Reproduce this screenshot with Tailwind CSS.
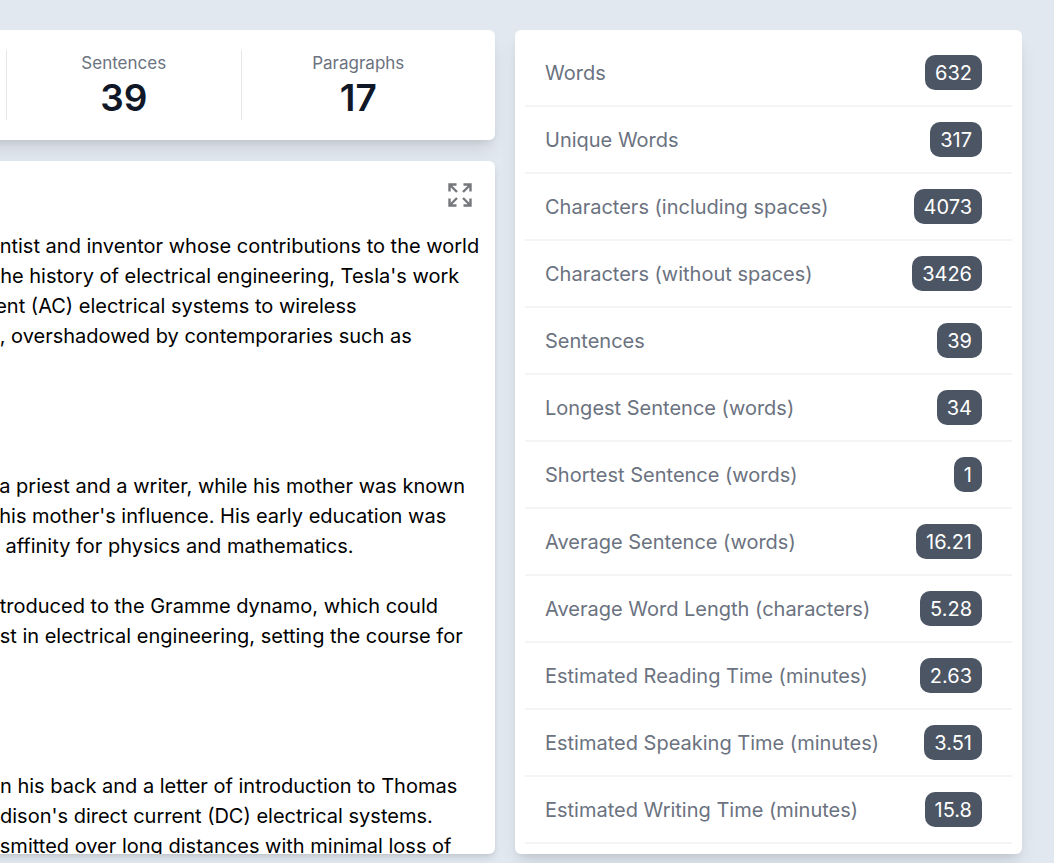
<!DOCTYPE html>
<html lang="en">
<head>
  <meta charset="UTF-8" />
  <meta name="viewport" content="width=device-width, initial-scale=1.0"/>
  <title>Word Counter</title>
  <script src="https://cdn.jsdelivr.net/npm/@tailwindcss/browser@4"></script>
</head>

<body class="bg-[#e2e8f0] font-['Inter',sans-serif] overflow-x-hidden">
  <main class="grid grid-cols-[495fr_507fr] gap-5 pt-[30px] pr-8 pb-[9px]">

    <!-- Left column -->
    <div class="min-w-0 flex flex-col gap-[21px]">
      <!-- Summary -->
      <section class="bg-white rounded-md shadow-[0_12px_19px_-4px_rgb(0_0_0/0.1),0_5px_8px_-4px_rgb(0_0_0/0.1)] -ml-5 pl-[26px] pr-5 py-5">
        <dl class="grid grid-cols-2 text-center">
          <div class="border-l border-gray-200">
            <dt class="text-[17px] leading-[26px] text-[#6b7280]">Sentences</dt>
            <dd class="text-[37px] leading-[44px] font-semibold text-gray-900">39</dd>
          </div>
          <div class="border-l border-gray-200">
            <dt class="text-[17px] leading-[26px] text-[#6b7280]">Paragraphs</dt>
            <dd class="text-[37px] leading-[44px] font-semibold text-gray-900">17</dd>
          </div>
        </dl>
      </section>

      <!-- Editor -->
      <section class="flex-1 flex flex-col bg-white rounded-md shadow-[0_5px_8px_-1px_rgb(0_0_0/0.1),0_2px_5px_-2px_rgb(0_0_0/0.1)] -ml-5 pl-5 overflow-hidden">
        <div class="flex justify-end pt-[22px] pr-[23px] pb-6">
          <button type="button" aria-label="Full screen" class="text-[#75777b]">
            <svg class="block size-6" viewBox="0 0 24 24" fill="none" stroke="currentColor" stroke-width="2.4">
              <path d="M1.5 8.5V1.5H8.5M1.5 1.5L9 9" />
              <path d="M15.5 1.5H22.5V8.5M22.5 1.5L15 9" />
              <path d="M1.5 15.5V22.5H8.5M1.5 22.5L9 15" />
              <path d="M15.5 22.5H22.5V15.5M22.5 22.5L15 15" />
            </svg>
          </button>
        </div>
        <textarea aria-label="Text" spellcheck="false" class="flex-1 block w-full -ml-3 resize-none outline-none overflow-hidden whitespace-pre text-[20px] leading-[30px] text-black">
entist and inventor whose contributions to the world
 the history of electrical engineering, Tesla's work
rent (AC) electrical systems to wireless
e, overshadowed by contemporaries such as




  a priest and a writer, while his mother was known
  his mother's influence. His early education was
n affinity for physics and mathematics.

ntroduced to the Gramme dynamo, which could
est in electrical engineering, setting the course for




on his back and a letter of introduction to Thomas
Edison's direct current (DC) electrical systems.
nsmitted over long distances with minimal loss of</textarea>
      </section>
    </div>

    <!-- Details -->
    <section class="min-w-0 bg-white rounded-md shadow-[0_12px_19px_-4px_rgb(0_0_0/0.1),0_5px_8px_-4px_rgb(0_0_0/0.1)] p-2.5">
      <dl class="text-[20px]">
        <div class="flex items-center justify-between border-b-2 border-gray-100 pl-5 pr-[30px] py-[15px]">
          <dt class="text-[#6b7280]">Words</dt>
          <dd class="bg-[#4b5563] text-white rounded-[10px] px-2.5 pt-[3px] pb-[2px]">632</dd>
        </div>
        <div class="flex items-center justify-between border-b-2 border-gray-100 pl-5 pr-[30px] py-[15px]">
          <dt class="text-[#6b7280]">Unique Words</dt>
          <dd class="bg-[#4b5563] text-white rounded-[10px] px-2.5 pt-[3px] pb-[2px]">317</dd>
        </div>
        <div class="flex items-center justify-between border-b-2 border-gray-100 pl-5 pr-[30px] py-[15px]">
          <dt class="text-[#6b7280]">Characters (including spaces)</dt>
          <dd class="bg-[#4b5563] text-white rounded-[10px] px-2.5 pt-[3px] pb-[2px]">4073</dd>
        </div>
        <div class="flex items-center justify-between border-b-2 border-gray-100 pl-5 pr-[30px] py-[15px]">
          <dt class="text-[#6b7280]">Characters (without spaces)</dt>
          <dd class="bg-[#4b5563] text-white rounded-[10px] px-2.5 pt-[3px] pb-[2px]">3426</dd>
        </div>
        <div class="flex items-center justify-between border-b-2 border-gray-100 pl-5 pr-[30px] py-[15px]">
          <dt class="text-[#6b7280]">Sentences</dt>
          <dd class="bg-[#4b5563] text-white rounded-[10px] px-2.5 pt-[3px] pb-[2px]">39</dd>
        </div>
        <div class="flex items-center justify-between border-b-2 border-gray-100 pl-5 pr-[30px] py-[15px]">
          <dt class="text-[#6b7280]">Longest Sentence (words)</dt>
          <dd class="bg-[#4b5563] text-white rounded-[10px] px-2.5 pt-[3px] pb-[2px]">34</dd>
        </div>
        <div class="flex items-center justify-between border-b-2 border-gray-100 pl-5 pr-[30px] py-[15px]">
          <dt class="text-[#6b7280]">Shortest Sentence (words)</dt>
          <dd class="bg-[#4b5563] text-white rounded-[10px] px-2.5 pt-[3px] pb-[2px]">1</dd>
        </div>
        <div class="flex items-center justify-between border-b-2 border-gray-100 pl-5 pr-[30px] py-[15px]">
          <dt class="text-[#6b7280]">Average Sentence (words)</dt>
          <dd class="bg-[#4b5563] text-white rounded-[10px] px-2.5 pt-[3px] pb-[2px]">16.21</dd>
        </div>
        <div class="flex items-center justify-between border-b-2 border-gray-100 pl-5 pr-[30px] py-[15px]">
          <dt class="text-[#6b7280]">Average Word Length (characters)</dt>
          <dd class="bg-[#4b5563] text-white rounded-[10px] px-2.5 pt-[3px] pb-[2px]">5.28</dd>
        </div>
        <div class="flex items-center justify-between border-b-2 border-gray-100 pl-5 pr-[30px] py-[15px]">
          <dt class="text-[#6b7280]">Estimated Reading Time (minutes)</dt>
          <dd class="bg-[#4b5563] text-white rounded-[10px] px-2.5 pt-[3px] pb-[2px]">2.63</dd>
        </div>
        <div class="flex items-center justify-between border-b-2 border-gray-100 pl-5 pr-[30px] py-[15px]">
          <dt class="text-[#6b7280]">Estimated Speaking Time (minutes)</dt>
          <dd class="bg-[#4b5563] text-white rounded-[10px] px-2.5 pt-[3px] pb-[2px]">3.51</dd>
        </div>
        <div class="flex items-center justify-between border-b-2 border-gray-100 pl-5 pr-[30px] py-[15px]">
          <dt class="text-[#6b7280]">Estimated Writing Time (minutes)</dt>
          <dd class="bg-[#4b5563] text-white rounded-[10px] px-2.5 pt-[3px] pb-[2px]">15.8</dd>
        </div>
      </dl>
    </section>
  </main>
</body>
</html>
